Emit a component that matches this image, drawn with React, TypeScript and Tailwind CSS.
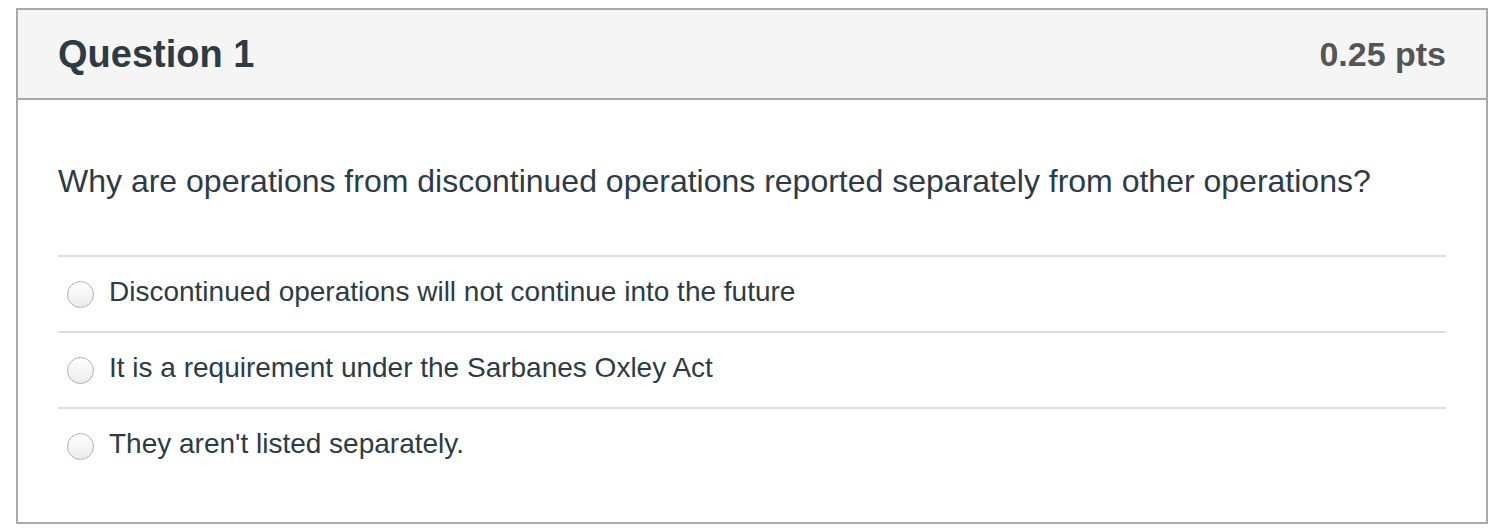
import React from "react";

const options = [
  "Discontinued operations will not continue into the future",
  "It is a requirement under the Sarbanes Oxley Act",
  "They aren't listed separately.",
];

const Radio: React.FC = () => (
  <span className="block h-[27px] w-[27px] shrink-0 rounded-full border border-[#b0b0b0] bg-gradient-to-b from-white to-[#ececec] shadow-[inset_0_1px_1px_rgba(255,255,255,0.9)]" />
);

export default function App() {
  return (
    <div className="min-h-[532px] bg-white pl-[16px] pt-[8px] font-['Helvetica','Liberation_Sans',Arial,sans-serif] text-[#2d3b45]">
      <div className="w-[1472px] border-2 border-[#a9a9a9]">
        <div className="flex h-[90px] items-center justify-between border-b-2 border-[#a9a9a9] bg-[#f5f5f5] px-[40px]">
          <h2 className="text-[38px] font-bold leading-none">Question 1</h2>
          <div className="text-[34px] font-bold leading-none text-[#555]">0.25 pts</div>
        </div>
        <div className="px-[40px] pb-[39px] pt-[57px]">
          <p className="mb-[50px] text-[32px] leading-[48px]">
            Why are operations from discontinued operations reported separately from other operations?
          </p>
          {options.map((o) => (
            <div key={o} className="flex h-[76px] items-center border-t-2 border-[#dddddd] pl-[9px]">
              <Radio />
              <span className="mb-[4px] ml-[15px] text-[28px] leading-none">{o}</span>
            </div>
          ))}
        </div>
      </div>
    </div>
  );
}
